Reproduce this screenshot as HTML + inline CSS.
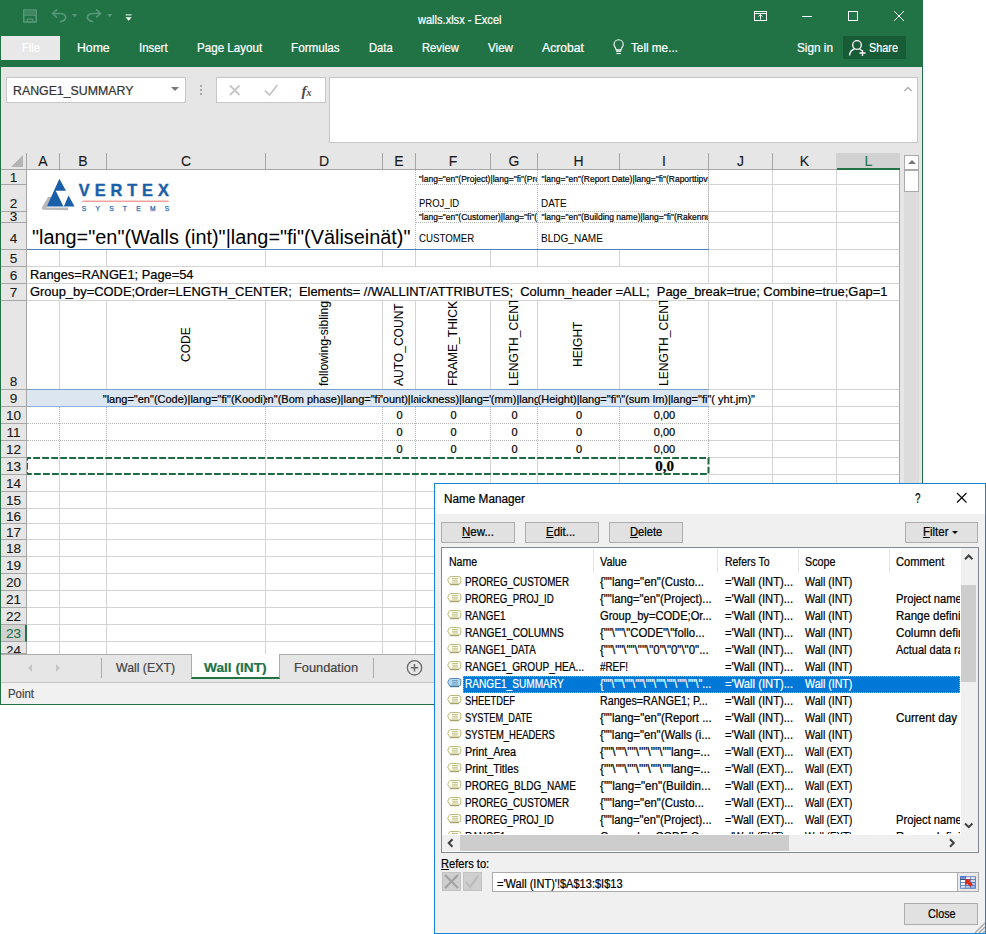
<!DOCTYPE html>
<html><head><meta charset="utf-8"><title>walls.xlsx - Excel</title>
<style>
html,body{margin:0;padding:0}
body{width:986px;height:934px;position:relative;background:#fff;overflow:hidden;font-family:"Liberation Sans",sans-serif;font-size:12px;color:#000}
div,span{position:absolute;box-sizing:border-box;white-space:pre;-webkit-text-stroke:0.220px currentColor}
svg{position:absolute}
#xl{left:0;top:0;width:923px;height:705px;background:#e6e6e6;border:1px solid #217346}
#top{left:0;top:0;width:923px;height:67px;background:#217346}
.ch{top:153px;height:16px;font-size:14px;-webkit-text-stroke:0.100px currentColor;text-align:center;line-height:17px;color:#1a1a1a;border-right:1px solid #a6a6a6}
.rh{left:1px;width:25px;font-size:13.600px;color:#1a1a1a;border-bottom:1px solid #a6a6a6;overflow:hidden}
.rh span{-webkit-text-stroke:0.100px currentColor;left:0;width:25px;height:17px;line-height:17px;text-align:center}
.vl{width:1px;background:#d4d4d4}
.hl{height:1px;background:#d4d4d4}
.sm{font-size:8px;line-height:10px}
.rot{-webkit-text-stroke:0.050px currentColor;transform-origin:0 0;transform:rotate(-90deg) scaleX(0.905);font-size:13.300px;line-height:15px}
.num{font-size:11px;text-align:center;line-height:13px}
.btn{background:#e1e1e1;border:1px solid #adadad}
</style></head><body>

<div id="xl"></div><div id="top"></div>
<div style="left:418px;top:12px;font-size:13px;line-height:16px;transform-origin:0 0;transform:scaleX(0.8499);color:#fff;">walls.xlsx - Excel</div>
<svg style="left:0;top:0" width="923" height="67" viewBox="0 0 923 67">
<g fill="none" stroke="#57977a" stroke-width="1.600" stroke-linejoin="round">
<rect x="23.800" y="10" width="12.400" height="12"/><path d="M24 15.200H36" stroke-width="1.200"/><rect x="24.500" y="10.500" width="11" height="4.500" fill="#3f8562" stroke="none"/><rect x="27.300" y="19.200" width="5.400" height="3" stroke-width="1.200"/>
<path d="M57 9.400 L52.600 13.500 L57 17.600 M53.200 13.500 H60.500 C65.500 13.500 67 17.500 64.500 19.800 C63.300 20.900 61.800 21.500 60 21.600"/>
<path d="M96.100 9.400 L100.500 13.500 L96.100 17.600 M99.900 13.500 H92.600 C87.600 13.500 86.100 17.500 88.600 19.800 C89.800 20.900 91.300 21.500 93.100 21.600"/>
</g>
<path d="M72 14 h5.200 l-2.600 3.200z M107.200 14 h5.200 l-2.600 3.200z" fill="#57977a"/>
<path d="M125.700 14.900 h5.800" stroke="#fff" fill="none" stroke-width="1"/><path d="M125.500 17.300 h6.200 l-3.100 3.400z" fill="#fff"/>
<g fill="none" stroke="#fff" stroke-width="1">
<rect x="754.500" y="11.500" width="12" height="9"/><path d="M754.500 13.500h12 M760.500 19.500v-4.500 M758.500 16.500l2-2 l2 2"/>
<path d="M802 16.500h10"/>
<rect x="848.500" y="11.500" width="9" height="9"/>
<path d="M894 11 l10 10 M904 11 l-10 10"/>
<path d="M616 49.800 C616 47.500 614 46.700 614 44.400 A4.600 4.600 0 0 1 623.200 44.400 C623.200 46.700 621.200 47.500 621.200 49.800 Z" stroke-width="1.100"/><path d="M616 51.100 H621.200" stroke-width="1.500"/><path d="M616.400 53.600 H620.800" stroke-width="1"/>
</g>
</svg>
<div style="left:1px;top:36px;width:59px;height:24px;background:#e8e8e8"></div>
<div style="left:21.5px;top:40px;font-size:13px;line-height:16px;transform-origin:0 0;transform:scaleX(0.8591);color:#fff;">File</div>
<div style="left:77.3px;top:40px;font-size:13px;line-height:16px;transform-origin:0 0;transform:scaleX(0.9427);color:#fff;">Home</div>
<div style="left:139.2px;top:40px;font-size:13px;line-height:16px;transform-origin:0 0;transform:scaleX(0.8796);color:#fff;">Insert</div>
<div style="left:197px;top:40px;font-size:13px;line-height:16px;transform-origin:0 0;transform:scaleX(0.8930);color:#fff;">Page Layout</div>
<div style="left:291.2px;top:40px;font-size:13px;line-height:16px;transform-origin:0 0;transform:scaleX(0.8987);color:#fff;">Formulas</div>
<div style="left:369.3px;top:40px;font-size:13px;line-height:16px;transform-origin:0 0;transform:scaleX(0.8592);color:#fff;">Data</div>
<div style="left:422px;top:40px;font-size:13px;line-height:16px;transform-origin:0 0;transform:scaleX(0.8633);color:#fff;">Review</div>
<div style="left:488px;top:40px;font-size:13px;line-height:16px;transform-origin:0 0;transform:scaleX(0.8944);color:#fff;">View</div>
<div style="left:542px;top:40px;font-size:13px;line-height:16px;transform-origin:0 0;transform:scaleX(0.9372);color:#fff;">Acrobat</div>
<div style="left:630.9px;top:40px;font-size:13px;line-height:16px;transform-origin:0 0;transform:scaleX(0.9017);color:#fff;">Tell me...</div>
<div style="left:796.7px;top:40px;font-size:13px;line-height:16px;transform-origin:0 0;transform:scaleX(0.9057);color:#fff;">Sign in</div>
<div style="left:843px;top:36px;width:63px;height:23px;background:#185c37"></div>
<div style="left:869px;top:40px;font-size:13px;line-height:16px;transform-origin:0 0;transform:scaleX(0.8357);color:#fff;">Share</div>
<svg style="left:846px;top:38px" width="24" height="20" viewBox="0 0 24 20"><g fill="none" stroke="#fff" stroke-width="1.300"><circle cx="11" cy="7" r="4.300"/><path d="M3.500 17.500 c0.500-4 3-6 5-6.500 M13.500 11.200 c1 0.300 2 1 2.500 1.500 M16.500 12v6 M13.500 15h6"/></g></svg>
<div style="left:6px;top:77px;width:180px;height:26px;background:#fff;border:1px solid #c6c6c6"></div>
<div style="left:13.2px;top:82.5px;font-size:13px;line-height:16px;transform-origin:0 0;transform:scaleX(0.9487);color:#333;">RANGE1_SUMMARY</div>
<div style="left:171px;top:87px;width:0;height:0;border-left:4px solid transparent;border-right:4px solid transparent;border-top:4px solid #777"></div>
<div style="left:200px;top:85px;width:2px;height:2px;background:#aaa"></div>
<div style="left:200px;top:89px;width:2px;height:2px;background:#aaa"></div>
<div style="left:200px;top:93px;width:2px;height:2px;background:#aaa"></div>
<div style="left:216px;top:77px;width:110px;height:26px;background:#fff;border:1px solid #c6c6c6"></div>
<svg style="left:216px;top:77px" width="110" height="26" viewBox="0 0 110 26"><g fill="none" stroke="#c6c6c6" stroke-width="1.800"><path d="M14 8.500l9.500 9.500 M23.500 8.500l-9.500 9.500"/><path d="M49 13.500l4.500 4.500l8-10"/></g><text x="85.500" y="19" font-family="Liberation Serif,serif" font-style="italic" font-weight="bold" font-size="15" fill="#4a4a4a">f</text><text x="90.500" y="19" font-family="Liberation Serif,serif" font-style="italic" font-size="10" font-weight="bold" fill="#4a4a4a">x</text></svg>
<div style="left:329px;top:77px;width:589px;height:66px;background:#fff;border:1px solid #c6c6c6"></div>
<svg style="left:903px;top:85px" width="10" height="8"><path d="M1.500 6l3.500-3.500l3.500 3.500" fill="none" stroke="#b0b0b0" stroke-width="1.500"/></svg>
<div style="left:27px;top:170px;width:873px;height:484px;background:#fff"></div>
<div style="left:1px;top:169px;width:899px;height:1px;background:#a6a6a6"></div>
<div class="ch" style="left:27px;width:33px;">A</div>
<div class="ch" style="left:60px;width:47px;">B</div>
<div class="ch" style="left:107px;width:159px;">C</div>
<div class="ch" style="left:266px;width:117px;">D</div>
<div class="ch" style="left:383px;width:33px;">E</div>
<div class="ch" style="left:416px;width:75px;">F</div>
<div class="ch" style="left:491px;width:47px;">G</div>
<div class="ch" style="left:538px;width:82px;">H</div>
<div class="ch" style="left:620px;width:89px;">I</div>
<div class="ch" style="left:709px;width:64px;">J</div>
<div class="ch" style="left:773px;width:64px;border-right-color:#d2d2d2;">K</div>
<div class="ch" style="left:837px;width:63px;background:#d2d2d2;color:#217346;height:17px;border-bottom:2px solid #217346;border-right:none;">L</div>
<div style="left:26px;top:153px;width:1px;height:501px;background:#a6a6a6"></div>
<div style="left:11px;top:155px;width:0;height:0;border-left:12px solid transparent;border-bottom:12px solid #b4b4b4"></div>
<div class="rh" style="top:170px;height:15px;"><span style="top:-1px">1</span></div>
<div class="rh" style="top:185px;height:27px;"><span style="top:9.5px">2</span></div>
<div class="rh" style="top:212px;height:11px;"><span style="top:-4px">3</span></div>
<div class="rh" style="top:223px;height:27px;"><span style="top:6.5px">4</span></div>
<div class="rh" style="top:250px;height:17px;"><span style="top:0px">5</span></div>
<div class="rh" style="top:267px;height:17px;"><span style="top:0px">6</span></div>
<div class="rh" style="top:284px;height:17px;"><span style="top:0px">7</span></div>
<div class="rh" style="top:301px;height:89px;"><span style="top:72px">8</span></div>
<div class="rh" style="top:390px;height:17px;"><span style="top:0px">9</span></div>
<div class="rh" style="top:407px;height:17px;"><span style="top:0px">10</span></div>
<div class="rh" style="top:424px;height:17px;"><span style="top:0px">11</span></div>
<div class="rh" style="top:441px;height:17px;"><span style="top:0px">12</span></div>
<div class="rh" style="top:458px;height:17px;"><span style="top:0px">13</span></div>
<div class="rh" style="top:475px;height:17px;"><span style="top:0px">14</span></div>
<div class="rh" style="top:492px;height:17px;"><span style="top:0px">15</span></div>
<div class="rh" style="top:509px;height:15px;"><span style="top:-1px">16</span></div>
<div class="rh" style="top:524px;height:16px;"><span style="top:-0.5px">17</span></div>
<div class="rh" style="top:540px;height:17px;"><span style="top:0px">18</span></div>
<div class="rh" style="top:557px;height:17px;"><span style="top:0px">19</span></div>
<div class="rh" style="top:574px;height:17px;"><span style="top:0px">20</span></div>
<div class="rh" style="top:591px;height:17px;"><span style="top:0px">21</span></div>
<div class="rh" style="top:608px;height:17px;"><span style="top:0px">22</span></div>
<div class="rh" style="top:625px;height:17px;background:#d2d2d2;color:#217346;width:26px;border-right:2px solid #217346;"><span style="top:0px">23</span></div>
<div class="rh" style="top:642px;height:12px;"><span style="top:0px">24</span></div>
<div class="vl" style="left:59px;top:170px;height:484px"></div>
<div class="vl" style="left:106px;top:170px;height:484px"></div>
<div class="vl" style="left:265px;top:170px;height:484px"></div>
<div class="vl" style="left:382px;top:170px;height:484px"></div>
<div class="vl" style="left:415px;top:170px;height:484px"></div>
<div class="vl" style="left:490px;top:170px;height:484px"></div>
<div class="vl" style="left:537px;top:170px;height:484px"></div>
<div class="vl" style="left:619px;top:170px;height:484px"></div>
<div class="vl" style="left:708px;top:170px;height:484px"></div>
<div class="vl" style="left:772px;top:170px;height:484px"></div>
<div class="vl" style="left:836px;top:170px;height:484px"></div>
<div class="vl" style="left:899px;top:170px;height:484px"></div>
<div class="hl" style="left:27px;top:184px;width:873px"></div>
<div class="hl" style="left:27px;top:211px;width:873px"></div>
<div class="hl" style="left:27px;top:222px;width:873px"></div>
<div class="hl" style="left:27px;top:249px;width:873px"></div>
<div class="hl" style="left:27px;top:266px;width:873px"></div>
<div class="hl" style="left:27px;top:283px;width:873px"></div>
<div class="hl" style="left:27px;top:300px;width:873px"></div>
<div class="hl" style="left:27px;top:389px;width:873px"></div>
<div class="hl" style="left:27px;top:406px;width:873px"></div>
<div class="hl" style="left:27px;top:423px;width:873px"></div>
<div class="hl" style="left:27px;top:440px;width:873px"></div>
<div class="hl" style="left:27px;top:457px;width:873px"></div>
<div class="hl" style="left:27px;top:474px;width:873px"></div>
<div class="hl" style="left:27px;top:491px;width:873px"></div>
<div class="hl" style="left:27px;top:508px;width:873px"></div>
<div class="hl" style="left:27px;top:523px;width:873px"></div>
<div class="hl" style="left:27px;top:539px;width:873px"></div>
<div class="hl" style="left:27px;top:556px;width:873px"></div>
<div class="hl" style="left:27px;top:573px;width:873px"></div>
<div class="hl" style="left:27px;top:590px;width:873px"></div>
<div class="hl" style="left:27px;top:607px;width:873px"></div>
<div class="hl" style="left:27px;top:624px;width:873px"></div>
<div class="hl" style="left:27px;top:641px;width:873px"></div>
<div style="left:27px;top:170px;width:681px;height:79px;background:#fff"></div>
<div style="left:27px;top:284px;width:872px;height:16px;background:#fff"></div>
<div style="left:27px;top:267px;width:681px;height:16px;background:#fff"></div>
<div style="left:27px;top:390px;width:682px;height:85px;background:#fff"></div>
<div style="left:27px;top:249px;width:682px;height:1px;background:#4f81bd"></div>
<div style="left:415px;top:170px;width:0;height:79px;border-left:1px dotted #b4b4b4"></div>
<div style="left:537px;top:170px;width:0;height:79px;border-left:1px dotted #b4b4b4"></div>
<div style="left:708px;top:170px;width:0;height:79px;border-left:1px dotted #b4b4b4"></div>
<div style="left:416px;top:184px;width:293px;height:0;border-top:1px dotted #b4b4b4"></div>
<div style="left:416px;top:211px;width:293px;height:0;border-top:1px dotted #b4b4b4"></div>
<div style="left:416px;top:222px;width:293px;height:0;border-top:1px dotted #b4b4b4"></div>
<svg style="left:36px;top:172px" width="144" height="46" viewBox="36 172 144 46">
<path d="M48 197 L51.500 197 L46.500 207.500 L67.800 207.500 L68.300 210.300 L43.500 209.800 Q41 209.500 42.300 206.800 Z" fill="#b9b9b9"/>
<path d="M59.400 178.800 L74.600 206.500 L46.800 206.500 Z" fill="#1a60a9"/>
<path d="M55.600 190.800 L67.400 190.800 L69.600 195.200 L68.300 195.900 L63.800 206.600 L63.400 206.600 L56.600 192.600 Z" fill="#fff"/>
<path d="M82.400 201.200 H168.600" stroke="#e9756c" stroke-width="1"/>
<text x="78.800" y="196.100" font-family="Liberation Sans,sans-serif" font-weight="bold" font-size="16.300" fill="#1a60a9" stroke="#1a60a9" stroke-width="0.400" textLength="90" lengthAdjust="spacing">VERTEX</text>
<text x="81.700" y="210.700" font-family="Liberation Sans,sans-serif" font-size="6.700" fill="#2a6bb0" stroke="#2a6bb0" stroke-width="0.250" textLength="87.500" lengthAdjust="spacing">SYSTEMS</text>
</svg>
<div style="left:32px;top:225px;font-size:20px;line-height:24px;transform-origin:0 0;transform:scaleX(0.9935);color:#000;-webkit-text-stroke:0;">"lang="en"(Walls (int)"|lang="fi"(Väliseinät)"</div>
<div style="left:418.8px;top:174px;width:118.19999999999999px;height:11px;overflow:hidden;font-size:8.500px;line-height:11px;-webkit-text-stroke:0.200px #000">"lang="en"(Project)|lang="fi"(Projekti)"</div>
<div style="left:541.4px;top:174px;width:166.60000000000002px;height:11px;overflow:hidden;font-size:8.500px;line-height:11px;-webkit-text-stroke:0.200px #000">"lang="en"(Report Date)|lang="fi"(Raporttipvm)"</div>
<div style="left:418.8px;top:212px;width:118.19999999999999px;height:11px;overflow:hidden;font-size:8.500px;line-height:11px;-webkit-text-stroke:0.200px #000">"lang="en"(Customer)|lang="fi"(Asiakas)"</div>
<div style="left:541.4px;top:212px;width:166.60000000000002px;height:11px;overflow:hidden;font-size:8.500px;line-height:11px;-webkit-text-stroke:0.200px #000">"lang="en"(Building name)|lang="fi"(Rakennuksen nimi)"</div>
<div style="left:418.5px;top:197px;font-size:10.3px;line-height:14px;transform-origin:0 0;transform:scaleX(0.9241);color:#000;-webkit-text-stroke:0;">PROJ_ID</div>
<div style="left:540.5px;top:197px;font-size:10.3px;line-height:14px;transform-origin:0 0;transform:scaleX(0.9624);color:#000;-webkit-text-stroke:0;">DATE</div>
<div style="left:418.5px;top:232px;font-size:10.3px;line-height:14px;transform-origin:0 0;transform:scaleX(0.9413);color:#000;-webkit-text-stroke:0;">CUSTOMER</div>
<div style="left:540.5px;top:232px;font-size:10.3px;line-height:14px;transform-origin:0 0;transform:scaleX(0.9743);color:#000;-webkit-text-stroke:0;">BLDG_NAME</div>
<div style="left:29.5px;top:267px;font-size:13.3px;line-height:16px;transform-origin:0 0;transform:scaleX(0.9658);color:#000;">Ranges=RANGE1; Page=54</div>
<div style="left:29.5px;top:284px;font-size:13.3px;line-height:16px;transform-origin:0 0;transform:scaleX(0.9705);color:#000;">Group_by=CODE;Order=LENGTH_CENTER;  Elements= //WALLINT/ATTRIBUTES;  Column_header =ALL;  Page_break=true; Combine=true;Gap=1</div>
<div style="left:107px;top:301px;width:158px;height:88px;overflow:hidden"><div class="rot" style="left:70.7px;top:60.5px;width:170px;">CODE</div></div>
<div style="left:266px;top:301px;width:116px;height:88px;overflow:hidden"><div class="rot" style="left:49.7px;top:85px;width:170px;">following-sibling::node()</div></div>
<div style="left:383px;top:301px;width:32px;height:88px;overflow:hidden"><div class="rot" style="left:7.7px;top:85px;width:170px;">AUTO_COUNT</div></div>
<div style="left:416px;top:301px;width:74px;height:88px;overflow:hidden"><div class="rot" style="left:28.7px;top:85px;width:170px;">FRAME_THICKNESS</div></div>
<div style="left:491px;top:301px;width:46px;height:88px;overflow:hidden"><div class="rot" style="left:14.7px;top:85px;width:170px;">LENGTH_CENTER</div></div>
<div style="left:538px;top:301px;width:81px;height:88px;overflow:hidden"><div class="rot" style="left:32.2px;top:65.5px;width:170px;">HEIGHT</div></div>
<div style="left:620px;top:301px;width:88px;height:88px;overflow:hidden"><div class="rot" style="left:35.7px;top:85px;width:170px;">LENGTH_CENTER</div></div>
<div style="left:27px;top:389px;width:682px;height:18px;background:#dce6f1;border-top:1px solid #7ba0d0;border-bottom:1px solid #8eb0dd"></div>
<div style="left:60px;top:390px;width:206px;height:16px;overflow:hidden"><div style="left:126.5px;top:2.5px;transform:translateX(-50%);font-size:11px;line-height:13px">"lang="en"(Code)|lang="fi"(Koodi)"</div></div>
<div style="left:266px;top:390px;width:117px;height:16px;overflow:hidden"><div style="left:58.5px;top:2.5px;transform:translateX(-50%);font-size:11px;line-height:13px">"lang="en"(Bom phase)|lang="fi"(Vaihe)"</div></div>
<div style="left:383px;top:390px;width:33px;height:16px;overflow:hidden"><div style="left:16.5px;top:2.5px;transform:translateX(-50%);font-size:11px;line-height:13px">"lang="en"(count)|lang="fi"(kpl)"</div></div>
<div style="left:416px;top:390px;width:75px;height:16px;overflow:hidden"><div style="left:37.5px;top:2.5px;transform:translateX(-50%);font-size:11px;line-height:13px">"lang="en"(Thickness)|lang="fi"(Paksuus)"</div></div>
<div style="left:491px;top:390px;width:47px;height:16px;overflow:hidden"><div style="left:23.5px;top:2.5px;transform:translateX(-50%);font-size:11px;line-height:13px">"lang="en"(mm)|lang="fi"(mm)"</div></div>
<div style="left:538px;top:390px;width:82px;height:16px;overflow:hidden"><div style="left:41.0px;top:2.5px;transform:translateX(-50%);font-size:11px;line-height:13px">"lang="en"(Height)|lang="fi"(Korkeus)"</div></div>
<div style="left:620px;top:390px;width:180px;height:16px;overflow:hidden"><div style="left:44.5px;top:2.5px;transform:translateX(-50%);font-size:11px;line-height:13px">"lang="en"(sum lm)|lang="fi"( yht.jm)"</div></div>
<div style="left:59px;top:407px;width:0;height:51px;border-left:1px dotted #b4b4b4"></div>
<div style="left:106px;top:407px;width:0;height:51px;border-left:1px dotted #b4b4b4"></div>
<div style="left:265px;top:407px;width:0;height:51px;border-left:1px dotted #b4b4b4"></div>
<div style="left:382px;top:407px;width:0;height:51px;border-left:1px dotted #b4b4b4"></div>
<div style="left:415px;top:407px;width:0;height:51px;border-left:1px dotted #b4b4b4"></div>
<div style="left:490px;top:407px;width:0;height:51px;border-left:1px dotted #b4b4b4"></div>
<div style="left:537px;top:407px;width:0;height:51px;border-left:1px dotted #b4b4b4"></div>
<div style="left:619px;top:407px;width:0;height:51px;border-left:1px dotted #b4b4b4"></div>
<div style="left:708px;top:407px;width:0;height:51px;border-left:1px dotted #b4b4b4"></div>
<div style="left:27px;top:423px;width:682px;height:0;border-top:1px dotted #b4b4b4"></div>
<div style="left:27px;top:440px;width:682px;height:0;border-top:1px dotted #b4b4b4"></div>
<div class="num" style="left:383px;width:33px;top:409px">0</div>
<div class="num" style="left:416px;width:75px;top:409px">0</div>
<div class="num" style="left:491px;width:47px;top:409px">0</div>
<div class="num" style="left:538px;width:82px;top:409px">0</div>
<div class="num" style="left:620px;width:89px;top:409px">0,00</div>
<div class="num" style="left:383px;width:33px;top:426px">0</div>
<div class="num" style="left:416px;width:75px;top:426px">0</div>
<div class="num" style="left:491px;width:47px;top:426px">0</div>
<div class="num" style="left:538px;width:82px;top:426px">0</div>
<div class="num" style="left:620px;width:89px;top:426px">0,00</div>
<div class="num" style="left:383px;width:33px;top:443px">0</div>
<div class="num" style="left:416px;width:75px;top:443px">0</div>
<div class="num" style="left:491px;width:47px;top:443px">0</div>
<div class="num" style="left:538px;width:82px;top:443px">0</div>
<div class="num" style="left:620px;width:89px;top:443px">0,00</div>
<div class="vl" style="left:59px;top:458px;height:17px"></div>
<div class="vl" style="left:106px;top:458px;height:17px"></div>
<div class="vl" style="left:265px;top:458px;height:17px"></div>
<div class="vl" style="left:382px;top:458px;height:17px"></div>
<div class="vl" style="left:415px;top:458px;height:17px"></div>
<div class="vl" style="left:490px;top:458px;height:17px"></div>
<div class="vl" style="left:537px;top:458px;height:17px"></div>
<div class="vl" style="left:619px;top:458px;height:17px"></div>
<div style="left:620px;width:89px;top:458px;font-family:'Liberation Serif',serif;font-weight:bold;font-size:15px;line-height:16px;text-align:center">0,0</div>
<svg style="left:27px;top:455px" width="686" height="23" viewBox="0 0 686 23"><rect x="0" y="3" width="681.500" height="16" fill="none" stroke="#1e6b41" stroke-width="2" stroke-dasharray="6.800 2.200" stroke-dashoffset="2.800"/></svg>
<div style="left:900px;top:153px;width:22px;height:501px;background:#e6e6e6"></div>
<div style="left:904px;top:170px;width:15px;height:485px;background:#dcdcdc"></div><div style="left:904px;top:155px;width:15px;height:15px;background:#fff;border:1px solid #ababab"></div>
<div style="left:907.500px;top:160px;width:0;height:0;border-left:4px solid transparent;border-right:4px solid transparent;border-bottom:4px solid #777"></div>
<div style="left:904px;top:170px;width:15px;height:22px;background:#fff;border:1px solid #ababab"></div>
<div style="left:899px;top:170px;height:484px;background:#a6a6a6;width:1px"></div>
<div style="left:1px;top:654px;width:921px;height:29px;background:#e6e6e6;border-top:1px solid #ababab;border-bottom:1px solid #c6c6c6"></div>
<div style="left:28px;top:664px;width:0;height:0;border-top:4px solid transparent;border-bottom:4px solid transparent;border-right:4px solid #c6c6c6"></div>
<div style="left:56px;top:664px;width:0;height:0;border-top:4px solid transparent;border-bottom:4px solid transparent;border-left:4px solid #c6c6c6"></div>
<div style="left:101px;top:658px;width:1px;height:20px;background:#ababab"></div>
<div style="left:191px;top:654px;width:89px;height:25px;background:#fff;border-left:1px solid #ababab;border-right:1px solid #ababab;border-bottom:2px solid #217346"></div>
<div style="left:116px;top:659.5px;font-size:13px;line-height:16px;transform-origin:0 0;transform:scaleX(0.9461);color:#444;">Wall (EXT)</div>
<div style="left:203.6px;top:659.5px;font-size:13px;line-height:16px;transform-origin:0 0;transform:scaleX(1.0529);color:#217346;font-weight:bold;">Wall (INT)</div>
<div style="left:294px;top:659.5px;font-size:13px;line-height:16px;transform-origin:0 0;transform:scaleX(0.9837);color:#444;">Foundation</div>
<div style="left:373px;top:658px;width:1px;height:20px;background:#ababab"></div>
<svg style="left:405px;top:658px" width="20" height="20" viewBox="0 0 20 20"><circle cx="9.500" cy="9.800" r="7.200" fill="none" stroke="#6a6a6a" stroke-width="1.300"/><path d="M5.800 9.800h7.400M9.500 6.100v7.400" stroke="#6a6a6a" stroke-width="1.500"/></svg>
<div style="left:1px;top:683px;width:921px;height:21px;background:#f1f1f1"></div>
<div style="left:8px;top:685.5px;font-size:12px;line-height:16px;transform-origin:0 0;transform:scaleX(0.9503);color:#444;">Point</div>
<div id="dlg" style="left:434px;top:483px;width:552px;height:451px;background:#f0f0f0;border:1px solid #1883d7"></div>
<div style="left:435px;top:484px;width:550px;height:30px;background:#fff"></div>
<div style="left:443.6px;top:491px;font-size:12px;line-height:16px;transform-origin:0 0;transform:scaleX(0.9792);color:#000;">Name Manager</div>
<div style="left:914.5px;top:490px;font-size:14px;line-height:16px;transform-origin:0 0;transform:scaleX(0.7054);color:#000;">?</div>
<svg style="left:955px;top:491px" width="13" height="13"><path d="M2 2l9.500 9.500M11.500 2l-9.500 9.500" stroke="#000" stroke-width="1.100" fill="none"/></svg>
<div class="btn" style="left:441px;top:522px;width:74px;height:21px"></div>
<div style="left:462px;top:524px;font-size:12px;line-height:16px;transform-origin:0 0;transform:scaleX(0.9593);color:#000;"><u>N</u>ew...</div>
<div class="btn" style="left:525px;top:522px;width:74px;height:21px"></div>
<div style="left:546.4px;top:524px;font-size:12px;line-height:16px;transform-origin:0 0;transform:scaleX(0.9548);color:#000;"><u>E</u>dit...</div>
<div class="btn" style="left:609px;top:522px;width:74px;height:21px"></div>
<div style="left:629.7px;top:524px;font-size:12px;line-height:16px;transform-origin:0 0;transform:scaleX(0.9312);color:#000;"><u>D</u>elete</div>
<div class="btn" style="left:905px;top:522px;width:73px;height:21px"></div>
<div style="left:923.3px;top:524px;font-size:12px;line-height:16px;transform-origin:0 0;transform:scaleX(0.9561);color:#000;"><u>F</u>ilter</div>
<div style="left:952px;top:530.500px;width:0;height:0;border-left:3px solid transparent;border-right:3px solid transparent;border-top:3px solid #000"></div>
<div style="left:441px;top:547px;width:538px;height:306px;background:#fff;border:1px solid #828790"></div>
<div style="left:449.3px;top:553.5px;font-size:12px;line-height:16px;transform-origin:0 0;transform:scaleX(0.8777);color:#000;">Name</div>
<div style="left:599.6px;top:553.5px;font-size:12px;line-height:16px;transform-origin:0 0;transform:scaleX(0.9023);color:#000;">Value</div>
<div style="left:724.5px;top:553.5px;font-size:12px;line-height:16px;transform-origin:0 0;transform:scaleX(0.8701);color:#000;">Refers To</div>
<div style="left:805.4px;top:553.5px;font-size:12px;line-height:16px;transform-origin:0 0;transform:scaleX(0.8933);color:#000;">Scope</div>
<div style="left:896.3px;top:553.5px;font-size:12px;line-height:16px;transform-origin:0 0;transform:scaleX(0.9286);color:#000;">Comment</div>
<div style="left:593px;top:549px;width:1px;height:24px;background:#e5e5e5"></div>
<div style="left:717px;top:549px;width:1px;height:24px;background:#e5e5e5"></div>
<div style="left:798px;top:549px;width:1px;height:24px;background:#e5e5e5"></div>
<div style="left:889px;top:549px;width:1px;height:24px;background:#e5e5e5"></div>
<div id="lb" style="left:442px;top:548px;width:518px;height:286px;overflow:hidden">
<svg style="left:5px;top:28px" width="15" height="10" viewBox="0 0 15 10"><path d="M3.500 0.500H11.500Q13.800 0.500 13.800 2.500V6Q13.800 8 11.500 8H3.500Q2.500 8 2.200 7L0.700 4.250L2.200 1.500Q2.500 0.500 3.500 0.500Z" fill="#fffef0" stroke="#b3b06a" stroke-width="0.900"/><path d="M3 8.700H12" stroke="#8f8d4c" stroke-width="0.900"/><path d="M5 2.500h6M5 4.250h6M5 6h6" stroke="#a4a860" stroke-width="0.700"/></svg>
<div style="left:23.4px;top:26px;font-size:12px;line-height:16px;transform-origin:0 0;transform:scaleX(0.8180);color:#000;">PROREG_CUSTOMER</div>
<div style="left:157.6px;top:26px;font-size:12px;line-height:16px;transform-origin:0 0;transform:scaleX(0.9503);color:#000;">{""lang="en"(Custo...</div>
<div style="left:282.5px;top:26px;font-size:12px;line-height:16px;transform-origin:0 0;transform:scaleX(0.9349);color:#000;">='Wall (INT)...</div>
<div style="left:363.4px;top:26px;font-size:12px;line-height:16px;transform-origin:0 0;transform:scaleX(0.8852);color:#000;">Wall (INT)</div>
<svg style="left:5px;top:45px" width="15" height="10" viewBox="0 0 15 10"><path d="M3.500 0.500H11.500Q13.800 0.500 13.800 2.500V6Q13.800 8 11.500 8H3.500Q2.500 8 2.200 7L0.700 4.250L2.200 1.500Q2.500 0.500 3.500 0.500Z" fill="#fffef0" stroke="#b3b06a" stroke-width="0.900"/><path d="M3 8.700H12" stroke="#8f8d4c" stroke-width="0.900"/><path d="M5 2.500h6M5 4.250h6M5 6h6" stroke="#a4a860" stroke-width="0.700"/></svg>
<div style="left:23.4px;top:43px;font-size:12px;line-height:16px;transform-origin:0 0;transform:scaleX(0.8120);color:#000;">PROREG_PROJ_ID</div>
<div style="left:157.6px;top:43px;font-size:12px;line-height:16px;transform-origin:0 0;transform:scaleX(0.9352);color:#000;">{""lang="en"(Project)...</div>
<div style="left:282.5px;top:43px;font-size:12px;line-height:16px;transform-origin:0 0;transform:scaleX(0.9349);color:#000;">='Wall (INT)...</div>
<div style="left:363.4px;top:43px;font-size:12px;line-height:16px;transform-origin:0 0;transform:scaleX(0.8852);color:#000;">Wall (INT)</div>
<div style="left:454.3px;top:43px;font-size:12px;line-height:16px;transform-origin:0 0;transform:scaleX(0.9308);color:#000;">Project name</div>
<svg style="left:5px;top:62px" width="15" height="10" viewBox="0 0 15 10"><path d="M3.500 0.500H11.500Q13.800 0.500 13.800 2.500V6Q13.800 8 11.500 8H3.500Q2.500 8 2.200 7L0.700 4.250L2.200 1.500Q2.500 0.500 3.500 0.500Z" fill="#fffef0" stroke="#b3b06a" stroke-width="0.900"/><path d="M3 8.700H12" stroke="#8f8d4c" stroke-width="0.900"/><path d="M5 2.500h6M5 4.250h6M5 6h6" stroke="#a4a860" stroke-width="0.700"/></svg>
<div style="left:23.4px;top:60px;font-size:12px;line-height:16px;transform-origin:0 0;transform:scaleX(0.8205);color:#000;">RANGE1</div>
<div style="left:157.6px;top:60px;font-size:12px;line-height:16px;transform-origin:0 0;transform:scaleX(0.9278);color:#000;">Group_by=CODE;Or...</div>
<div style="left:282.5px;top:60px;font-size:12px;line-height:16px;transform-origin:0 0;transform:scaleX(0.9349);color:#000;">='Wall (INT)...</div>
<div style="left:363.4px;top:60px;font-size:12px;line-height:16px;transform-origin:0 0;transform:scaleX(0.8852);color:#000;">Wall (INT)</div>
<div style="left:454.3px;top:60px;font-size:12px;line-height:16px;transform-origin:0 0;transform:scaleX(0.9580);color:#000;">Range definition</div>
<svg style="left:5px;top:79px" width="15" height="10" viewBox="0 0 15 10"><path d="M3.500 0.500H11.500Q13.800 0.500 13.800 2.500V6Q13.800 8 11.500 8H3.500Q2.500 8 2.200 7L0.700 4.250L2.200 1.500Q2.500 0.500 3.500 0.500Z" fill="#fffef0" stroke="#b3b06a" stroke-width="0.900"/><path d="M3 8.700H12" stroke="#8f8d4c" stroke-width="0.900"/><path d="M5 2.500h6M5 4.250h6M5 6h6" stroke="#a4a860" stroke-width="0.700"/></svg>
<div style="left:23.4px;top:77px;font-size:12px;line-height:16px;transform-origin:0 0;transform:scaleX(0.8506);color:#000;">RANGE1_COLUMNS</div>
<div style="left:157.6px;top:77px;font-size:12px;line-height:16px;transform-origin:0 0;transform:scaleX(0.9465);color:#000;">{""\""\"CODE"\"follo...</div>
<div style="left:282.5px;top:77px;font-size:12px;line-height:16px;transform-origin:0 0;transform:scaleX(0.9349);color:#000;">='Wall (INT)...</div>
<div style="left:363.4px;top:77px;font-size:12px;line-height:16px;transform-origin:0 0;transform:scaleX(0.8852);color:#000;">Wall (INT)</div>
<div style="left:454.3px;top:77px;font-size:12px;line-height:16px;transform-origin:0 0;transform:scaleX(0.9683);color:#000;">Column definition</div>
<svg style="left:5px;top:96px" width="15" height="10" viewBox="0 0 15 10"><path d="M3.500 0.500H11.500Q13.800 0.500 13.800 2.500V6Q13.800 8 11.500 8H3.500Q2.500 8 2.200 7L0.700 4.250L2.200 1.500Q2.500 0.500 3.500 0.500Z" fill="#fffef0" stroke="#b3b06a" stroke-width="0.900"/><path d="M3 8.700H12" stroke="#8f8d4c" stroke-width="0.900"/><path d="M5 2.500h6M5 4.250h6M5 6h6" stroke="#a4a860" stroke-width="0.700"/></svg>
<div style="left:23.4px;top:94px;font-size:12px;line-height:16px;transform-origin:0 0;transform:scaleX(0.8197);color:#000;">RANGE1_DATA</div>
<div style="left:157.6px;top:94px;font-size:12px;line-height:16px;transform-origin:0 0;transform:scaleX(0.9563);color:#000;">{""\""\""\""\"0"\"0"\"0"...</div>
<div style="left:282.5px;top:94px;font-size:12px;line-height:16px;transform-origin:0 0;transform:scaleX(0.9349);color:#000;">='Wall (INT)...</div>
<div style="left:363.4px;top:94px;font-size:12px;line-height:16px;transform-origin:0 0;transform:scaleX(0.8852);color:#000;">Wall (INT)</div>
<div style="left:454.3px;top:94px;font-size:12px;line-height:16px;transform-origin:0 0;transform:scaleX(0.9152);color:#000;">Actual data range</div>
<svg style="left:5px;top:113px" width="15" height="10" viewBox="0 0 15 10"><path d="M3.500 0.500H11.500Q13.800 0.500 13.800 2.500V6Q13.800 8 11.500 8H3.500Q2.500 8 2.200 7L0.700 4.250L2.200 1.500Q2.500 0.500 3.500 0.500Z" fill="#fffef0" stroke="#b3b06a" stroke-width="0.900"/><path d="M3 8.700H12" stroke="#8f8d4c" stroke-width="0.900"/><path d="M5 2.500h6M5 4.250h6M5 6h6" stroke="#a4a860" stroke-width="0.700"/></svg>
<div style="left:23.4px;top:111px;font-size:12px;line-height:16px;transform-origin:0 0;transform:scaleX(0.8417);color:#000;">RANGE1_GROUP_HEA...</div>
<div style="left:157.6px;top:111px;font-size:12px;line-height:16px;transform-origin:0 0;transform:scaleX(0.8202);color:#000;">#REF!</div>
<div style="left:282.5px;top:111px;font-size:12px;line-height:16px;transform-origin:0 0;transform:scaleX(0.9349);color:#000;">='Wall (INT)...</div>
<div style="left:363.4px;top:111px;font-size:12px;line-height:16px;transform-origin:0 0;transform:scaleX(0.8852);color:#000;">Wall (INT)</div>
<div style="left:21px;top:127.5px;width:497px;height:17px;background:#0078d7;border:1px dotted #e8a33d"></div>
<svg style="left:5px;top:130px" width="15" height="10" viewBox="0 0 15 10"><path d="M3.500 0.500H11.500Q13.800 0.500 13.800 2.500V6Q13.800 8 11.500 8H3.500Q2.500 8 2.200 7L0.700 4.250L2.200 1.500Q2.500 0.500 3.500 0.500Z" fill="#b9d9ee" stroke="#3f7fb3" stroke-width="0.900"/><path d="M3 8.700H12" stroke="#2a5c86" stroke-width="0.900"/><path d="M5 2.500h6M5 4.250h6M5 6h6" stroke="#4a86b8" stroke-width="0.700"/></svg>
<div style="left:23.4px;top:128px;font-size:12px;line-height:16px;transform-origin:0 0;transform:scaleX(0.8426);color:#fff;">RANGE1_SUMMARY</div>
<div style="left:157.6px;top:128px;font-size:12px;line-height:16px;transform-origin:0 0;transform:scaleX(0.8891);color:#fff;">{""\""\""\""\""\""\""\""\""\"...</div>
<div style="left:282.5px;top:128px;font-size:12px;line-height:16px;transform-origin:0 0;transform:scaleX(0.9349);color:#fff;">='Wall (INT)...</div>
<div style="left:363.4px;top:128px;font-size:12px;line-height:16px;transform-origin:0 0;transform:scaleX(0.8852);color:#fff;">Wall (INT)</div>
<svg style="left:5px;top:147px" width="15" height="10" viewBox="0 0 15 10"><path d="M3.500 0.500H11.500Q13.800 0.500 13.800 2.500V6Q13.800 8 11.500 8H3.500Q2.500 8 2.200 7L0.700 4.250L2.200 1.500Q2.500 0.500 3.500 0.500Z" fill="#fffef0" stroke="#b3b06a" stroke-width="0.900"/><path d="M3 8.700H12" stroke="#8f8d4c" stroke-width="0.900"/><path d="M5 2.500h6M5 4.250h6M5 6h6" stroke="#a4a860" stroke-width="0.700"/></svg>
<div style="left:23.4px;top:145px;font-size:12px;line-height:16px;transform-origin:0 0;transform:scaleX(0.7826);color:#000;">SHEETDEF</div>
<div style="left:157.6px;top:145px;font-size:12px;line-height:16px;transform-origin:0 0;transform:scaleX(0.8904);color:#000;">Ranges=RANGE1; P...</div>
<div style="left:282.5px;top:145px;font-size:12px;line-height:16px;transform-origin:0 0;transform:scaleX(0.9349);color:#000;">='Wall (INT)...</div>
<div style="left:363.4px;top:145px;font-size:12px;line-height:16px;transform-origin:0 0;transform:scaleX(0.8852);color:#000;">Wall (INT)</div>
<svg style="left:5px;top:164px" width="15" height="10" viewBox="0 0 15 10"><path d="M3.500 0.500H11.500Q13.800 0.500 13.800 2.500V6Q13.800 8 11.500 8H3.500Q2.500 8 2.200 7L0.700 4.250L2.200 1.500Q2.500 0.500 3.500 0.500Z" fill="#fffef0" stroke="#b3b06a" stroke-width="0.900"/><path d="M3 8.700H12" stroke="#8f8d4c" stroke-width="0.900"/><path d="M5 2.500h6M5 4.250h6M5 6h6" stroke="#a4a860" stroke-width="0.700"/></svg>
<div style="left:23.4px;top:162px;font-size:12px;line-height:16px;transform-origin:0 0;transform:scaleX(0.7723);color:#000;">SYSTEM_DATE</div>
<div style="left:157.6px;top:162px;font-size:12px;line-height:16px;transform-origin:0 0;transform:scaleX(0.9510);color:#000;">{""lang="en"(Report ...</div>
<div style="left:282.5px;top:162px;font-size:12px;line-height:16px;transform-origin:0 0;transform:scaleX(0.9349);color:#000;">='Wall (INT)...</div>
<div style="left:363.4px;top:162px;font-size:12px;line-height:16px;transform-origin:0 0;transform:scaleX(0.8852);color:#000;">Wall (INT)</div>
<div style="left:454.3px;top:162px;font-size:12px;line-height:16px;transform-origin:0 0;transform:scaleX(0.9728);color:#000;">Current day</div>
<svg style="left:5px;top:181px" width="15" height="10" viewBox="0 0 15 10"><path d="M3.500 0.500H11.500Q13.800 0.500 13.800 2.500V6Q13.800 8 11.500 8H3.500Q2.500 8 2.200 7L0.700 4.250L2.200 1.500Q2.500 0.500 3.500 0.500Z" fill="#fffef0" stroke="#b3b06a" stroke-width="0.900"/><path d="M3 8.700H12" stroke="#8f8d4c" stroke-width="0.900"/><path d="M5 2.500h6M5 4.250h6M5 6h6" stroke="#a4a860" stroke-width="0.700"/></svg>
<div style="left:23.4px;top:179px;font-size:12px;line-height:16px;transform-origin:0 0;transform:scaleX(0.7875);color:#000;">SYSTEM_HEADERS</div>
<div style="left:157.6px;top:179px;font-size:12px;line-height:16px;transform-origin:0 0;transform:scaleX(0.9463);color:#000;">{""lang="en"(Walls (i...</div>
<div style="left:282.5px;top:179px;font-size:12px;line-height:16px;transform-origin:0 0;transform:scaleX(0.9349);color:#000;">='Wall (INT)...</div>
<div style="left:363.4px;top:179px;font-size:12px;line-height:16px;transform-origin:0 0;transform:scaleX(0.8852);color:#000;">Wall (INT)</div>
<svg style="left:5px;top:198px" width="15" height="10" viewBox="0 0 15 10"><path d="M3.500 0.500H11.500Q13.800 0.500 13.800 2.500V6Q13.800 8 11.500 8H3.500Q2.500 8 2.200 7L0.700 4.250L2.200 1.500Q2.500 0.500 3.500 0.500Z" fill="#fffef0" stroke="#b3b06a" stroke-width="0.900"/><path d="M3 8.700H12" stroke="#8f8d4c" stroke-width="0.900"/><path d="M5 2.500h6M5 4.250h6M5 6h6" stroke="#a4a860" stroke-width="0.700"/></svg>
<div style="left:23.4px;top:196px;font-size:12px;line-height:16px;transform-origin:0 0;transform:scaleX(0.9012);color:#000;">Print_Area</div>
<div style="left:157.6px;top:196px;font-size:12px;line-height:16px;transform-origin:0 0;transform:scaleX(0.9874);color:#000;">{""\""\""\""\""\""lang=...</div>
<div style="left:282.5px;top:196px;font-size:12px;line-height:16px;transform-origin:0 0;transform:scaleX(0.8860);color:#000;">='Wall (EXT)...</div>
<div style="left:363.4px;top:196px;font-size:12px;line-height:16px;transform-origin:0 0;transform:scaleX(0.8235);color:#000;">Wall (EXT)</div>
<svg style="left:5px;top:215px" width="15" height="10" viewBox="0 0 15 10"><path d="M3.500 0.500H11.500Q13.800 0.500 13.800 2.500V6Q13.800 8 11.500 8H3.500Q2.500 8 2.200 7L0.700 4.250L2.200 1.500Q2.500 0.500 3.500 0.500Z" fill="#fffef0" stroke="#b3b06a" stroke-width="0.900"/><path d="M3 8.700H12" stroke="#8f8d4c" stroke-width="0.900"/><path d="M5 2.500h6M5 4.250h6M5 6h6" stroke="#a4a860" stroke-width="0.700"/></svg>
<div style="left:23.4px;top:213px;font-size:12px;line-height:16px;transform-origin:0 0;transform:scaleX(0.9013);color:#000;">Print_Titles</div>
<div style="left:157.6px;top:213px;font-size:12px;line-height:16px;transform-origin:0 0;transform:scaleX(0.9874);color:#000;">{""\""\""\""\""\""lang=...</div>
<div style="left:282.5px;top:213px;font-size:12px;line-height:16px;transform-origin:0 0;transform:scaleX(0.8860);color:#000;">='Wall (EXT)...</div>
<div style="left:363.4px;top:213px;font-size:12px;line-height:16px;transform-origin:0 0;transform:scaleX(0.8235);color:#000;">Wall (EXT)</div>
<svg style="left:5px;top:232px" width="15" height="10" viewBox="0 0 15 10"><path d="M3.500 0.500H11.500Q13.800 0.500 13.800 2.500V6Q13.800 8 11.500 8H3.500Q2.500 8 2.200 7L0.700 4.250L2.200 1.500Q2.500 0.500 3.500 0.500Z" fill="#fffef0" stroke="#b3b06a" stroke-width="0.900"/><path d="M3 8.700H12" stroke="#8f8d4c" stroke-width="0.900"/><path d="M5 2.500h6M5 4.250h6M5 6h6" stroke="#a4a860" stroke-width="0.700"/></svg>
<div style="left:23.4px;top:230px;font-size:12px;line-height:16px;transform-origin:0 0;transform:scaleX(0.8357);color:#000;">PROREG_BLDG_NAME</div>
<div style="left:157.6px;top:230px;font-size:12px;line-height:16px;transform-origin:0 0;transform:scaleX(0.9700);color:#000;">{""lang="en"(Buildin...</div>
<div style="left:282.5px;top:230px;font-size:12px;line-height:16px;transform-origin:0 0;transform:scaleX(0.8860);color:#000;">='Wall (EXT)...</div>
<div style="left:363.4px;top:230px;font-size:12px;line-height:16px;transform-origin:0 0;transform:scaleX(0.8235);color:#000;">Wall (EXT)</div>
<svg style="left:5px;top:249px" width="15" height="10" viewBox="0 0 15 10"><path d="M3.500 0.500H11.500Q13.800 0.500 13.800 2.500V6Q13.800 8 11.500 8H3.500Q2.500 8 2.200 7L0.700 4.250L2.200 1.500Q2.500 0.500 3.500 0.500Z" fill="#fffef0" stroke="#b3b06a" stroke-width="0.900"/><path d="M3 8.700H12" stroke="#8f8d4c" stroke-width="0.900"/><path d="M5 2.500h6M5 4.250h6M5 6h6" stroke="#a4a860" stroke-width="0.700"/></svg>
<div style="left:23.4px;top:247px;font-size:12px;line-height:16px;transform-origin:0 0;transform:scaleX(0.8180);color:#000;">PROREG_CUSTOMER</div>
<div style="left:157.6px;top:247px;font-size:12px;line-height:16px;transform-origin:0 0;transform:scaleX(0.9503);color:#000;">{""lang="en"(Custo...</div>
<div style="left:282.5px;top:247px;font-size:12px;line-height:16px;transform-origin:0 0;transform:scaleX(0.8860);color:#000;">='Wall (EXT)...</div>
<div style="left:363.4px;top:247px;font-size:12px;line-height:16px;transform-origin:0 0;transform:scaleX(0.8235);color:#000;">Wall (EXT)</div>
<svg style="left:5px;top:266px" width="15" height="10" viewBox="0 0 15 10"><path d="M3.500 0.500H11.500Q13.800 0.500 13.800 2.500V6Q13.800 8 11.500 8H3.500Q2.500 8 2.200 7L0.700 4.250L2.200 1.500Q2.500 0.500 3.500 0.500Z" fill="#fffef0" stroke="#b3b06a" stroke-width="0.900"/><path d="M3 8.700H12" stroke="#8f8d4c" stroke-width="0.900"/><path d="M5 2.500h6M5 4.250h6M5 6h6" stroke="#a4a860" stroke-width="0.700"/></svg>
<div style="left:23.4px;top:264px;font-size:12px;line-height:16px;transform-origin:0 0;transform:scaleX(0.8120);color:#000;">PROREG_PROJ_ID</div>
<div style="left:157.6px;top:264px;font-size:12px;line-height:16px;transform-origin:0 0;transform:scaleX(0.9352);color:#000;">{""lang="en"(Project)...</div>
<div style="left:282.5px;top:264px;font-size:12px;line-height:16px;transform-origin:0 0;transform:scaleX(0.8860);color:#000;">='Wall (EXT)...</div>
<div style="left:363.4px;top:264px;font-size:12px;line-height:16px;transform-origin:0 0;transform:scaleX(0.8235);color:#000;">Wall (EXT)</div>
<div style="left:454.3px;top:264px;font-size:12px;line-height:16px;transform-origin:0 0;transform:scaleX(0.9308);color:#000;">Project name</div>
<svg style="left:5px;top:283px" width="15" height="10" viewBox="0 0 15 10"><path d="M3.500 0.500H11.500Q13.800 0.500 13.800 2.500V6Q13.800 8 11.500 8H3.500Q2.500 8 2.200 7L0.700 4.250L2.200 1.500Q2.500 0.500 3.500 0.500Z" fill="#fffef0" stroke="#b3b06a" stroke-width="0.900"/><path d="M3 8.700H12" stroke="#8f8d4c" stroke-width="0.900"/><path d="M5 2.500h6M5 4.250h6M5 6h6" stroke="#a4a860" stroke-width="0.700"/></svg>
<div style="left:23.4px;top:281px;font-size:12px;line-height:16px;transform-origin:0 0;transform:scaleX(0.8205);color:#000;">RANGE1</div>
<div style="left:157.6px;top:281px;font-size:12px;line-height:16px;transform-origin:0 0;transform:scaleX(0.9278);color:#000;">Group_by=CODE;Or...</div>
<div style="left:282.5px;top:281px;font-size:12px;line-height:16px;transform-origin:0 0;transform:scaleX(0.8860);color:#000;">='Wall (EXT)...</div>
<div style="left:363.4px;top:281px;font-size:12px;line-height:16px;transform-origin:0 0;transform:scaleX(0.8235);color:#000;">Wall (EXT)</div>
<div style="left:454.3px;top:281px;font-size:12px;line-height:16px;transform-origin:0 0;transform:scaleX(0.9580);color:#000;">Range definition</div>
</div>
<div style="left:961px;top:548px;width:17px;height:287px;background:#f0f0f0"></div>
<div style="left:961px;top:585px;width:15px;height:97px;background:#cdcdcd"></div>
<svg style="left:961px;top:548px" width="17" height="287"><path d="M4 11.200l3.700-3.700l3.700 3.700" fill="none" stroke="#404040" stroke-width="2"/><path d="M4 275.500l3.700 3.700l3.700-3.700" fill="none" stroke="#404040" stroke-width="2"/></svg>
<div style="left:442px;top:835px;width:536px;height:16px;background:#f0f0f0"></div>
<div style="left:460px;top:835px;width:329px;height:16px;background:#cdcdcd"></div>
<svg style="left:442px;top:835px" width="536" height="16"><path d="M10.500 4.300l-3.700 3.700l3.700 3.700" fill="none" stroke="#404040" stroke-width="2"/><path d="M508 4.300l3.700 3.700l-3.700 3.700" fill="none" stroke="#404040" stroke-width="2"/></svg>
<div style="left:441.4px;top:856px;font-size:12px;line-height:16px;transform-origin:0 0;transform:scaleX(0.9264);color:#000;"><u>R</u>efers to:</div>
<div style="left:442px;top:872px;width:19px;height:19px;background:#cfcfcf;border:1px solid #c2c2c2"></div>
<div style="left:463px;top:872px;width:19px;height:19px;background:#cfcfcf;border:1px solid #c2c2c2"></div>
<svg style="left:442px;top:872px" width="40" height="19"><path d="M3 3l13 13M16 3l-13 13" stroke="#a3a3a3" stroke-width="2.300" fill="none"/><path d="M24 10l4 5l8-11" stroke="#bcbcbc" stroke-width="2.300" fill="none"/></svg>
<div style="left:492px;top:872px;width:486px;height:20px;background:#fff;border:1px solid #ababab"></div>
<div style="left:496.7px;top:875.5px;font-size:12px;line-height:16px;transform-origin:0 0;transform:scaleX(0.9199);color:#000;">='Wall (INT)'!$A$13:$I$13</div>
<div style="left:957px;top:872px;width:22px;height:20px;background:#e9e9e9;border:1.500px solid #a9abae"></div>
<svg style="left:959.500px;top:875.500px" width="16" height="13" viewBox="0 0 16 13">
<defs><linearGradient id="gsel" x1="0" y1="0" x2="1" y2="1"><stop offset="0.350" stop-color="#ffffff"/><stop offset="1" stop-color="#7f9fe6"/></linearGradient></defs>
<rect x="0.500" y="0.500" width="15" height="12" fill="url(#gsel)"/>
<path d="M0.500 0.500V12.500M5.700 0.500V12.500M10.700 0.500V12.500M15.500 0.500V12.500M0.500 0.700H15.500M0.500 3.500H15.500M0.500 6.500H15.500M0.500 9.500H15.500M0.500 12.300H15.500" stroke="#4f6fae" stroke-width="0.800" fill="none"/>
<rect x="0.300" y="0.200" width="5.800" height="1.600" fill="#3b6fd6"/><rect x="0.300" y="2.500" width="4.800" height="1.200" fill="#1f2f5a"/>
<path d="M5.500 3.300L10.600 3.700L9.200 5.300L12.500 8L10.200 10.500L7.200 7.400L5.600 9Z" fill="#d92b1a" stroke="#b21c10" stroke-width="0.400"/>
</svg>
<div class="btn" style="left:904px;top:903px;width:74px;height:22px"></div>
<div style="left:927.5px;top:906px;font-size:12px;line-height:16px;transform-origin:0 0;transform:scaleX(0.8961);color:#000;">Close</div>
<svg style="left:972px;top:920px" width="13" height="13"><path d="M13 3L3 13M13 7L7 13M13 11L11 13" stroke="#a8a8a8" stroke-width="1.400"/></svg>
</body></html>
